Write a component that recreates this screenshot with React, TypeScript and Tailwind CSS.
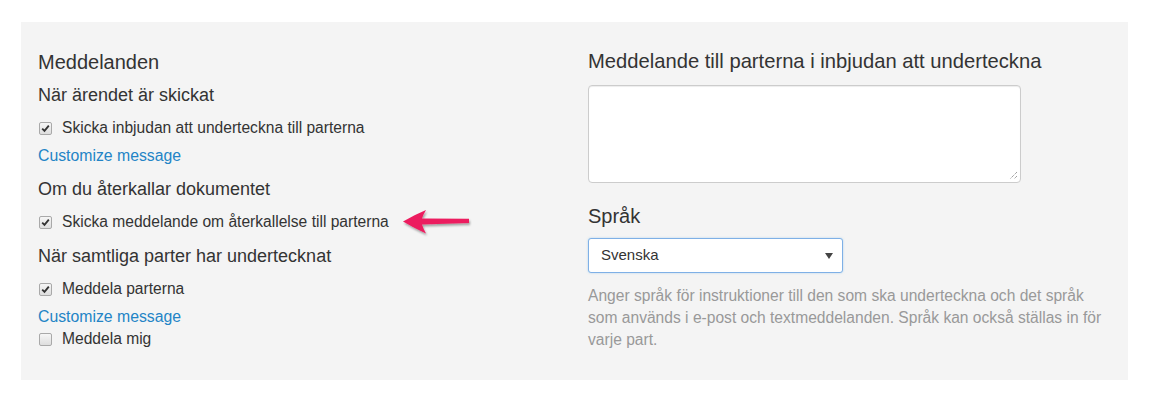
import React from "react";

function Check({ checked }: { checked: boolean }) {
  return (
    <span className="inline-flex h-[13px] w-[13px] shrink-0 items-center justify-center rounded-[2px] border border-[#a9a9a9] bg-gradient-to-b from-[#f6f6f6] to-[#dedede]">
      {checked && (
        <svg width="9" height="9" viewBox="0 0 9 9">
          <path d="M1.2 4.6 L3.5 6.9 L7.8 1.6" fill="none" stroke="#333" strokeWidth="1.8" />
        </svg>
      )}
    </span>
  );
}

function Row({ checked, label, className = "" }: { checked: boolean; label: string; className?: string }) {
  return (
    <div className={`flex items-center h-[20px] text-[15.6px] leading-[20px] ${className}`}>
      <span className="ml-[1px] mr-[10px] flex items-center">
        <Check checked={checked} />
      </span>
      <span>{label}</span>
    </div>
  );
}

function Arrow() {
  return (
    <svg width="72" height="30" viewBox="0 0 72 30" className="ml-[12px] mt-[3px]">
      <defs>
        <filter id="sh" x="-20%" y="-40%" width="140%" height="180%">
          <feDropShadow dx="1" dy="2" stdDeviation="1.3" floodColor="#000" floodOpacity="0.35" />
        </filter>
      </defs>
      <path
        d="M2 12.5 Q13 6 25 1 Q22 6 21 9.5 L68 9.8 L68 14 L21 15.5 Q22 19 25 24.5 Q13 19 2 12.5 Z"
        fill="#ec1d5e"
        filter="url(#sh)"
      />
    </svg>
  );
}

export default function App() {
  return (
    <div className="w-[1149px] h-[399px] bg-white pt-[22px] pl-[21px]" style={{ fontFamily: '"Liberation Sans", Arial, sans-serif' }}>
      <div className="w-[1107px] h-[358px] bg-[#f4f4f4] px-[17px] pt-[26px] text-[#333]">
        <div className="grid grid-cols-[523px_523px] gap-x-[27px]">
          <div>
            <div className="text-[20px] leading-[28px]">Meddelanden</div>
            <div className="mt-[7px] text-[18px] leading-[24px]">När ärendet är skickat</div>
            <Row className="mt-[11px]" checked label="Skicka inbjudan att underteckna till parterna" />
            <div className="mt-[8px] text-[15.8px] leading-[20px] text-[#2384c6]">Customize message</div>
            <div className="mt-[11px] text-[18px] leading-[24px]">Om du återkallar dokumentet</div>
            <div className="mt-[11px] flex items-center h-[20px]">
              <Row checked label="Skicka meddelande om återkallelse till parterna" />
              <Arrow />
            </div>
            <div className="mt-[12px] text-[18px] leading-[24px]">När samtliga parter har undertecknat</div>
            <Row className="mt-[11px]" checked label="Meddela parterna" />
            <div className="mt-[8px] text-[15.8px] leading-[20px] text-[#2384c6]">Customize message</div>
            <Row className="mt-[2px]" checked={false} label="Meddela mig" />
          </div>
          <div>
            <div className="text-[20.2px] leading-[28px] -mt-[1px]">Meddelande till parterna i inbjudan att underteckna</div>
            <div className="relative mt-[10px] h-[98px] w-[433px] rounded-[4px] border border-[#cccccc] bg-white shadow-[inset_0_1px_1px_rgba(0,0,0,0.075)]">
              <svg width="10" height="10" viewBox="0 0 10 10" className="absolute right-[2px] bottom-[2px]">
                <path d="M9 2 L2 9 M9 6 L6 9" stroke="#777" strokeWidth="1" strokeDasharray="1 1" />
              </svg>
            </div>
            <div className="mt-[19px] text-[20px] leading-[28px]">Språk</div>
            <div className="mt-[8px] flex h-[35px] w-[255px] items-center justify-between rounded-[3px] border border-[#7fb0e6] bg-white pl-[12px] pr-[9px] text-[15px] shadow-[0_0_2px_rgba(102,175,233,0.5)]">
              <span>Svenska</span>
              <svg width="8" height="6" viewBox="0 0 8 6">
                <path d="M0 0 L8 0 L4 6 Z" fill="#444" />
              </svg>
            </div>
            <p className="mt-[12px] w-[521px] text-[15.6px] leading-[22px] text-[#999999]">
              Anger språk för instruktioner till den som ska underteckna och det språk som används i e-post och textmeddelanden. Språk kan också ställas in för varje part.
            </p>
          </div>
        </div>
      </div>
    </div>
  );
}
